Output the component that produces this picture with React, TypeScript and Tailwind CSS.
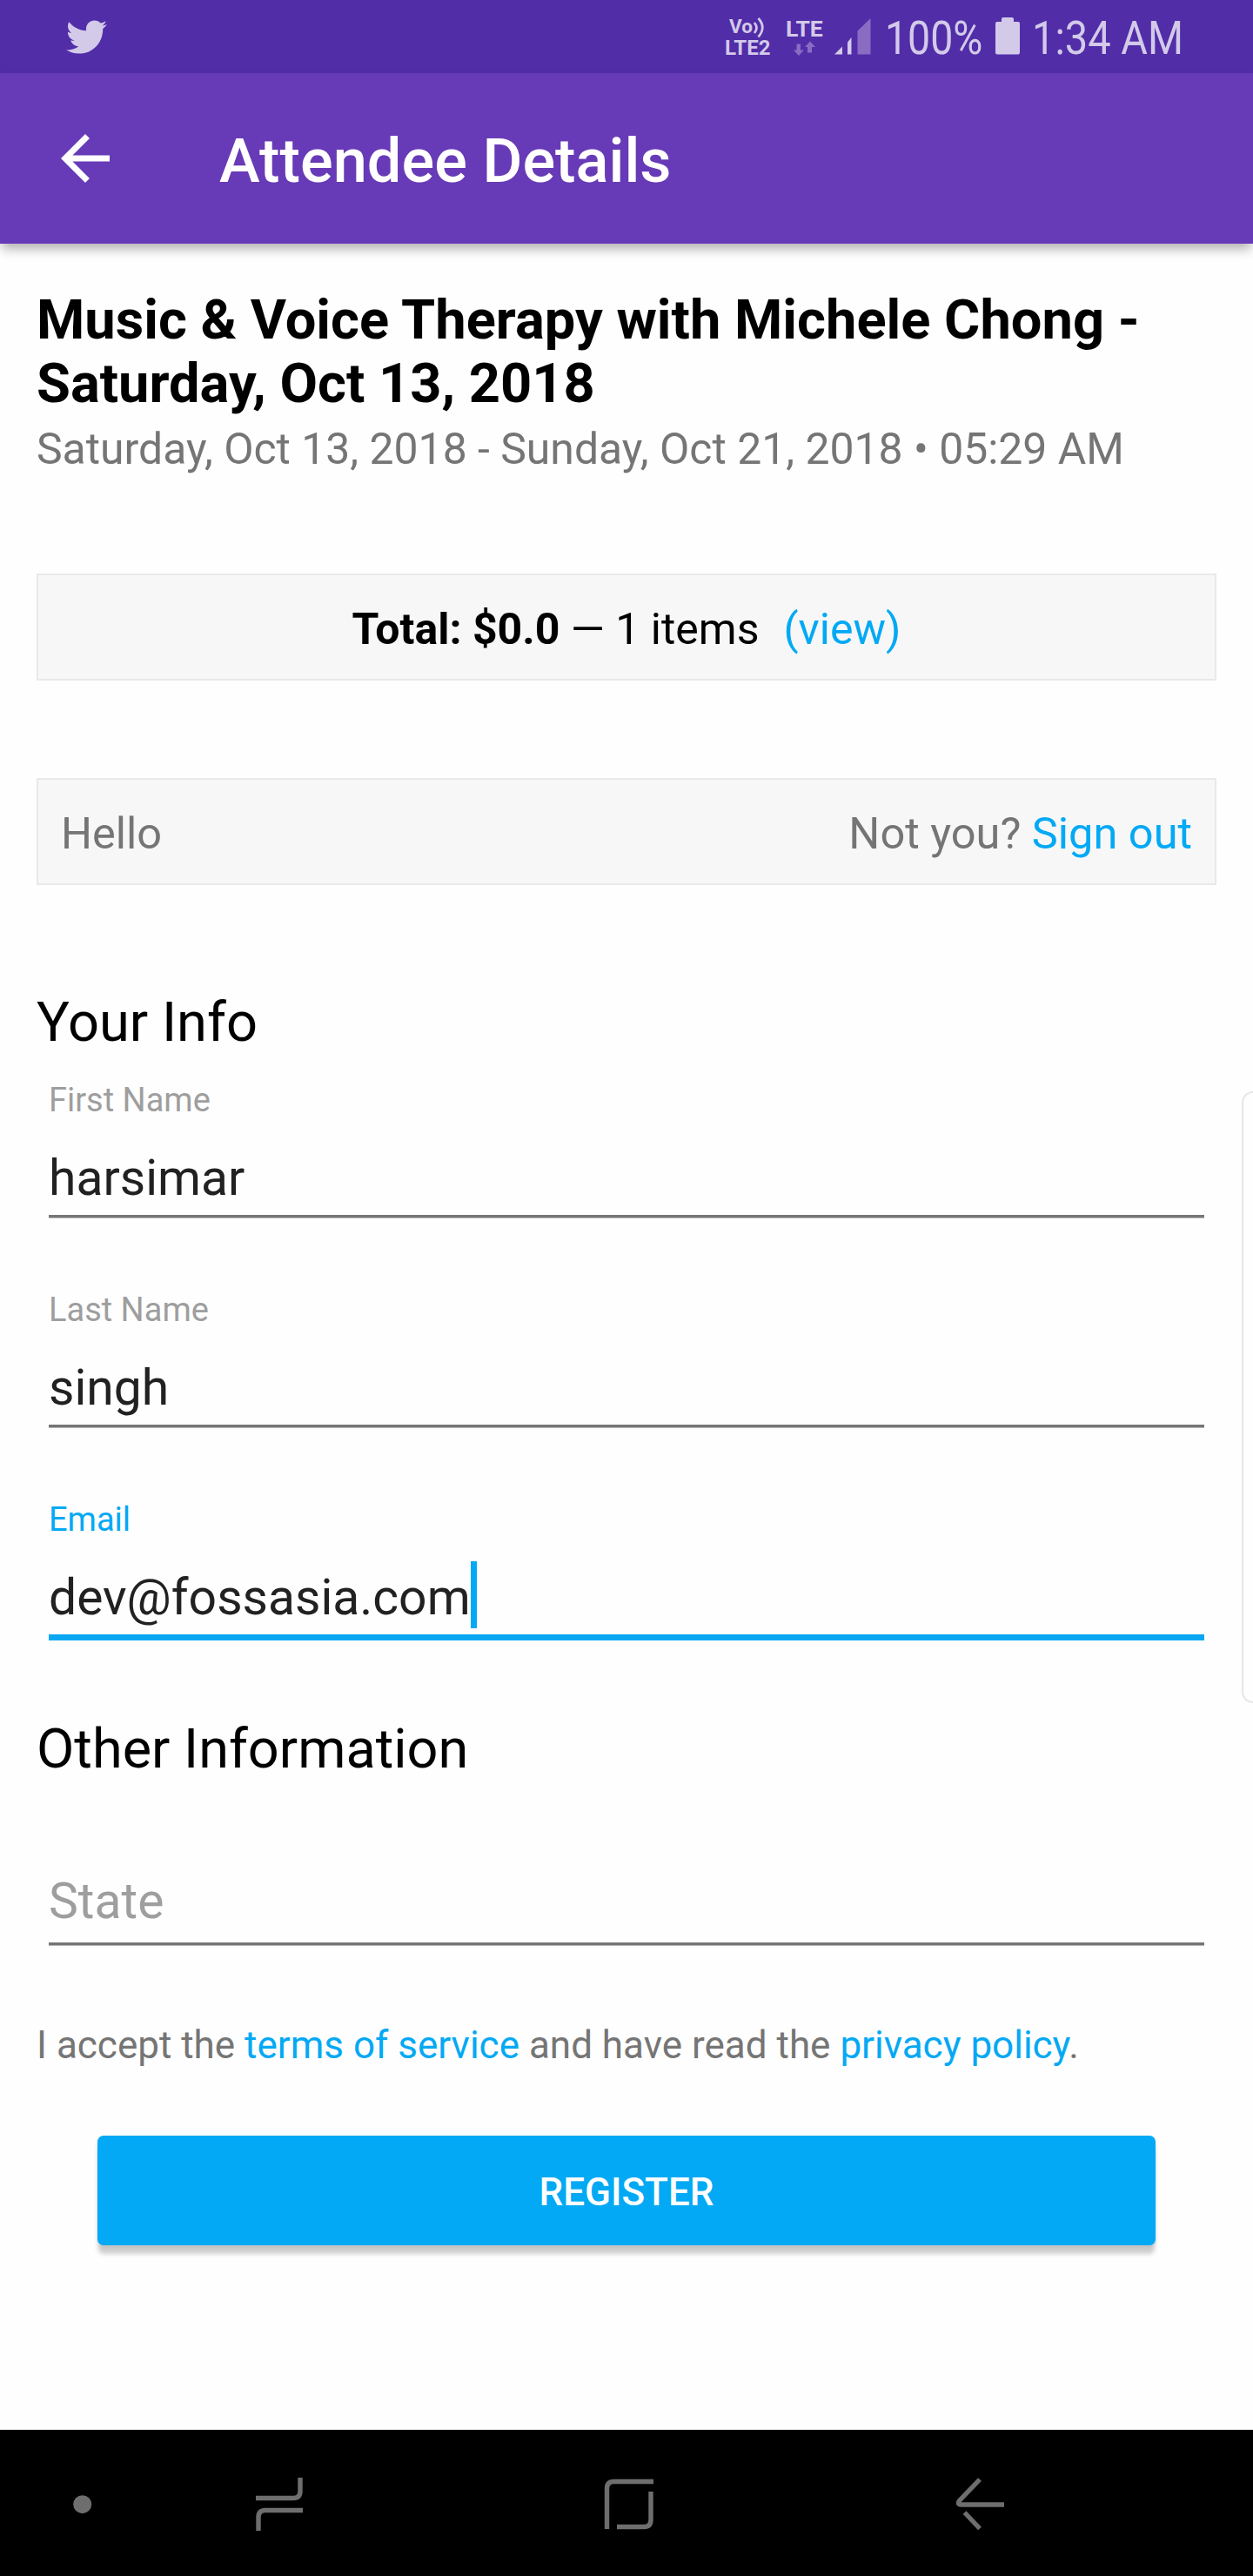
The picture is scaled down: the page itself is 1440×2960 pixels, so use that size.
import React from "react";
import { FaTwitter } from "react-icons/fa";
import { MdArrowBack } from "react-icons/md";

function VolteIcon() {
  return (
    <div className="flex w-[54px] flex-col font-bold">
      <div className="flex h-[23px] items-start pl-[5px]">
        <span className="text-[22.5px] leading-[23px]">Vo</span>
        <svg width="13" height="24" viewBox="0 0 13 24" className="ml-px shrink-0" fill="none" stroke="currentColor" strokeWidth="2.7">
          <path d="M1 7Q6 13 1 19" />
          <path d="M5.500 2Q15 12.500 5.500 23.500" />
        </svg>
      </div>
      <span className="text-[24px] leading-[26px]">LTE2</span>
    </div>
  );
}

function LteIcon() {
  return (
    <div className="ml-[16px] flex w-[46px] flex-col">
      <span className="text-[26.5px] leading-[28px] font-bold">LTE</span>
      <svg width="26" height="18" viewBox="0 0 26 18" className="ml-[9px]" fill="#8a6cc3">
        <path d="M3.5 3.5h4.5v7h4L6 17 0 10.500h3.500z" />
        <path d="M16 13.500h5V7h4L19 .5 13 7h3z" />
      </svg>
    </div>
  );
}

function StatusBar() {
  return (
    <div className="flex h-[84px] items-start bg-[#512da8] text-[#d3c9e9]">
      <FaTwitter size={47} className="mt-[19px] ml-[76px]" />
      <div className="ml-auto flex items-start pr-[78px]">
        <div className="flex pt-[19px]">
          <VolteIcon />
          <LteIcon />
        </div>
        <svg width="42" height="43" viewBox="0 0 42 43" className="mt-[20px] ml-[10px]" fill="currentColor">
          <path d="M0 42.500 9 33.500v9z" />
          <path d="M15 28.500 19.500 23v19.500h-4.500z" />
          <path d="M26.500 15.500 41.500 1v41.500h-15z" fill="#8a6cc3" />
        </svg>
        <div className="ml-[16px] w-[122px] pt-[12px]">
          <span className="inline-block origin-left scale-x-[0.86] text-[54px] leading-[64px]">100%</span>
        </div>
        <svg width="28" height="43" viewBox="0 0 28 43" className="mt-[20px] ml-[5px]" fill="currentColor">
          <path d="M9 0h10q2 0 2 2v3h5q2 0 2 2v33.500q0 2-2 2H2q-2 0-2-2V7q0-2 2-2h5V2q0-2 2-2z" />
        </svg>
        <div className="ml-[14px] w-[176px] pt-[12px]">
          <span className="inline-block origin-left scale-x-[0.87] text-[54px] leading-[64px] whitespace-nowrap">1:34 AM</span>
        </div>
      </div>
    </div>
  );
}

function AppBar() {
  return (
    <header className="relative flex h-[196px] items-center bg-[#673ab7] pl-[56px] text-white shadow-[0_8px_12px_-2px_rgba(0,0,0,0.3)]">
      <MdArrowBack size={84} />
      <h1 className="ml-[112px] pt-[5px] text-[70.4px] leading-[82px] font-medium">Attendee Details</h1>
    </header>
  );
}

function Label({ children, active }: { children: React.ReactNode; active?: boolean }) {
  return (
    <div className={`h-[46px] text-[38px] leading-[46px] ${active ? "text-[#03a9f4]" : "text-[#9e9e9e]"}`}>
      {children}
    </div>
  );
}

function Underline() {
  return <div className="h-[4px] border-b border-[#b5b5b5] bg-[#757575]" />;
}

function Field({ label, value, focused }: { label: string; value: string; focused?: boolean }) {
  return (
    <div className="h-[159px] px-[14px]">
      <Label active={focused}>{label}</Label>
      <div className="mt-[34px] mb-[9px] h-[66px] text-[57px] leading-[66px] text-[#212121]">
        <span className="relative inline-block">
          {value}
          {focused && <span className="absolute top-[-9px] left-full h-[77px] w-[7px] bg-[#03a9f4]" />}
        </span>
      </div>
      {focused ? <div className="h-[7px] bg-[#09a7f1]" /> : <Underline />}
    </div>
  );
}

function NavBar() {
  return (
    <nav className="flex h-[168px] shrink-0 items-start bg-black pt-[55px] pl-[84px] text-[#6e6e6e]">
      <svg width="22" height="62" viewBox="0 0 22 62" fill="currentColor">
        <circle cx="10.700" cy="30.700" r="10.500" />
      </svg>
      <svg width="54" height="62" viewBox="0 0 54 62" className="ml-[188px]" fill="none" stroke="currentColor" strokeWidth="5.400">
        <path d="M0 23.500H43Q51 23.500 51 15.500V0" />
        <path d="M54 37.500H11Q3 37.500 3 45.500V61" />
      </svg>
      <svg width="58" height="62" viewBox="0 0 58 62" className="ml-[346px]" fill="none" stroke="currentColor" strokeWidth="5.400">
        <path d="M57 4.500H11.500Q3.500 4.500 3.500 12.500V59" />
        <path d="M15 56.500H46Q54 56.500 54 48.500V16" />
      </svg>
      <svg width="56" height="62" viewBox="0 0 56 62" className="ml-[347px]" fill="none" stroke="currentColor" strokeWidth="5.400">
        <path d="M27 2 4 26Q0 31 6 31H55" />
        <path d="M9.500 40 27 58.500" />
      </svg>
    </nav>
  );
}

export default function App() {
  return (
    <div className="relative flex h-[2960px] w-[1440px] flex-col overflow-hidden bg-[#fefefe] font-['Roboto',sans-serif]">
      <StatusBar />
      <AppBar />

      <main className="flex grow flex-col px-[42px] pt-[51px]">
        <h2 className="text-[63.2px] leading-[73px] font-bold text-black">
          Music &amp; Voice Therapy with Michele Chong -<br />
          Saturday, Oct 13, 2018
        </h2>
        <p className="mt-[9px] h-[60px] text-[49.9px] leading-[60px] whitespace-nowrap text-[#757575]">
          Saturday, Oct 13, 2018 - Sunday, Oct 21, 2018 • 05:29 AM
        </p>

        <section className="mt-[113px] flex h-[123px] items-center justify-center border-2 border-[#e9e9e9] bg-[#f7f7f7] pt-[5px] text-[50px] leading-[60px] text-black">
          <span>
            <b>Total: $0.0</b> — 1 items
          </span>
          <a className="ml-[28px] text-[#03a9f4]">(view)</a>
        </section>

        <section className="mt-[112px] flex h-[123px] items-center justify-between border-2 border-[#e9e9e9] bg-[#f7f7f7] px-[26px] pt-[5px] text-[50.500px] leading-[60px] text-[#757575]">
          <span>Hello</span>
          <span>
            Not you? <a className="text-[#03a9f4]">Sign out</a>
          </span>
        </section>

        <h3 className="mt-[120px] h-[74px] text-[63.2px] leading-[74px] text-black">Your Info</h3>
        <div className="mt-[30px] flex flex-col gap-[82px]">
          <Field label="First Name" value="harsimar" />
          <Field label="Last Name" value="singh" />
          <Field label="Email" value="dev@fossasia.com" focused />
        </div>

        <h3 className="mt-[91px] h-[74px] text-[63px] leading-[74px] text-black">Other Information</h3>
        <div className="mt-[105px] px-[14px]">
          <div className="mb-[14px] h-[66px] text-[57px] leading-[66px] text-[#9e9e9e]">State</div>
          <Underline />
        </div>

        <p className="mt-[87px] h-[54px] text-[44px] leading-[54px] whitespace-nowrap text-[#757575]">
          I accept the <a className="text-[#03a9f4]">terms of service</a> and have read the{" "}
          <a className="text-[#03a9f4]">privacy policy</a>.
        </p>
        <button className="mx-[70px] mt-[77px] flex h-[126px] items-center justify-center rounded-[7px] bg-[#03a9f4] pt-[4px] text-[44px] leading-[52px] font-medium text-white shadow-[0_11px_5px_-1px_rgba(0,0,0,0.19),0_2px_5px_rgba(0,0,0,0.08)]">
          REGISTER
        </button>
      </main>

      <NavBar />
      <div className="absolute top-[1254px] right-0 h-[703px] w-[13px] rounded-l-[14px] border-2 border-r-0 border-[#e6e6e6]" />
    </div>
  );
}
